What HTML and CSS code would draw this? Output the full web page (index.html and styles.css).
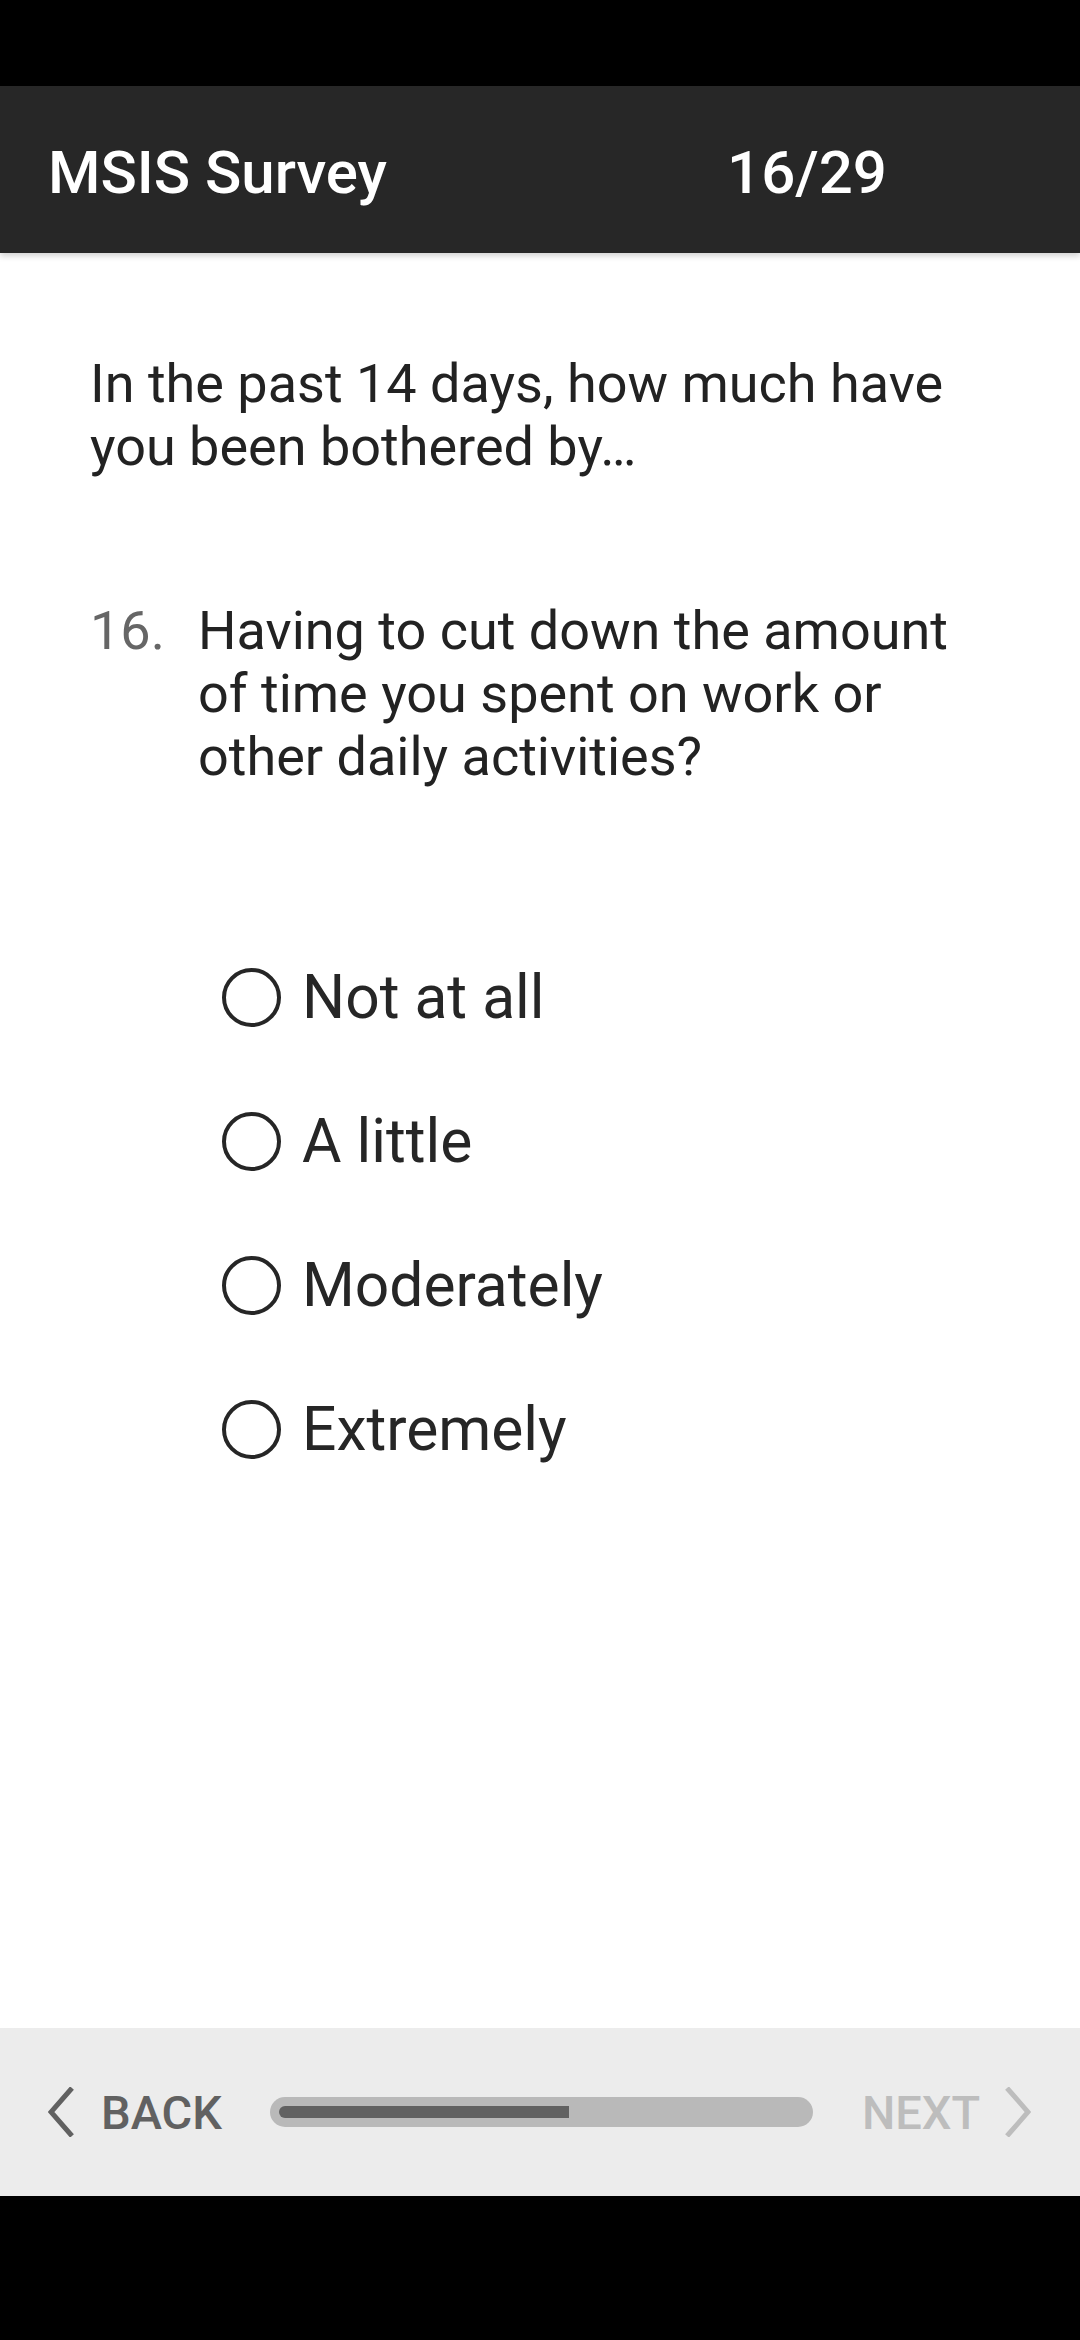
FILE: index.html
```html
<!DOCTYPE html>
<html lang="en">
<head>
<meta charset="utf-8">
<title>MSIS Survey</title>
<link rel="stylesheet" href="styles.css">
</head>
<body>
<div class="statusbar"></div>
<header class="appbar">
  <div class="title">MSIS Survey</div>
  <div class="counter">16/29</div>
</header>
<main class="content">
  <p class="intro">In the past 14 days, how much have you been bothered by…</p>
  <div class="question">
    <span class="qnum">16.</span>
    <span class="qtext">Having to cut down the amount of time you spent on work or other daily activities?</span>
  </div>
  <div class="options">
    <div class="option"><span class="radio"></span><span class="label">Not at all</span></div>
    <div class="option"><span class="radio"></span><span class="label">A little</span></div>
    <div class="option"><span class="radio"></span><span class="label">Moderately</span></div>
    <div class="option"><span class="radio"></span><span class="label">Extremely</span></div>
  </div>
</main>
<footer class="bottombar">
  <div class="nav back">
    <svg class="chev" width="26" height="50" viewBox="0 0 26 50"><polyline points="24,1 3,25 24,49" fill="none" stroke="currentColor" stroke-width="5" stroke-linejoin="miter"/></svg>
    <span class="navtext">BACK</span>
  </div>
  <div class="progress"><div class="fill" style="width: 55.17%"></div></div>
  <div class="nav next">
    <span class="navtext">NEXT</span>
    <svg class="chev" width="26" height="50" viewBox="0 0 26 50"><polyline points="2,1 23,25 2,49" fill="none" stroke="currentColor" stroke-width="5" stroke-linejoin="miter"/></svg>
  </div>
</footer>
<div class="navbar"></div>
</body>
</html>
```
FILE: styles.css
```css
html, body {
  margin: 0;
  padding: 0;
}
body {
  width: 1080px;
  height: 2340px;
  display: flex;
  flex-direction: column;
  font-family: Roboto, "Noto Sans", sans-serif;
  background: #ffffff;
  overflow: hidden;
}
.statusbar {
  height: 86px;
  background: #000;
  flex: none;
}
.appbar {
  height: 167px;
  flex: none;
  background: #272727;
  display: grid;
  grid-template-columns: 1fr 1fr;
  align-items: center;
  padding-top: 6px;
  box-sizing: border-box;
  box-shadow: 0 3px 6px rgba(0, 0, 0, 0.18);
  position: relative;
  z-index: 1;
  color: #fff;
  font-size: 60px;
  font-weight: 500;
}
.title {
  padding-left: 48px;
}
.counter {
  justify-self: center;
  margin-right: 6px;
}
.content {
  flex: 1;
  padding: 99px 80px 0 90px;
  color: #222;
}
.intro {
  margin: 0;
  font-size: 54px;
  line-height: 63px;
}
.question {
  margin-top: 121px;
  display: grid;
  grid-template-columns: 108px 1fr;
  font-size: 54px;
  line-height: 63px;
}
.qnum {
  color: #666;
}
.options {
  margin-top: 137px;
  padding-left: 132px;
}
.option {
  height: 144px;
  display: flex;
  align-items: center;
}
.radio {
  width: 59px;
  height: 59px;
  box-sizing: border-box;
  border: 4.5px solid #262626;
  border-radius: 50%;
  flex: none;
}
.label {
  margin-left: 21px;
  font-size: 60.5px;
  color: #262626;
}
.bottombar {
  height: 168px;
  flex: none;
  background: #ececec;
  display: flex;
  align-items: center;
  padding-left: 48px;
  box-sizing: border-box;
}
.nav {
  display: flex;
  align-items: center;
  font-size: 47px;
  font-weight: 500;
}
.back {
  color: #616161;
  gap: 27px;
}
.next {
  color: #bdbdbd;
  gap: 25px;
  margin-left: 49px;
}
.chev {
  display: block;
}
.progress {
  margin-left: 48px;
  width: 543px;
  height: 30px;
  box-sizing: border-box;
  padding: 9px;
  border-radius: 15px;
  background: #b9b9b9;
}
.fill {
  height: 12px;
  background: #616161;
  border-radius: 6px 0 0 6px;
}
.navbar {
  height: 144px;
  flex: none;
  background: #000;
}
```
